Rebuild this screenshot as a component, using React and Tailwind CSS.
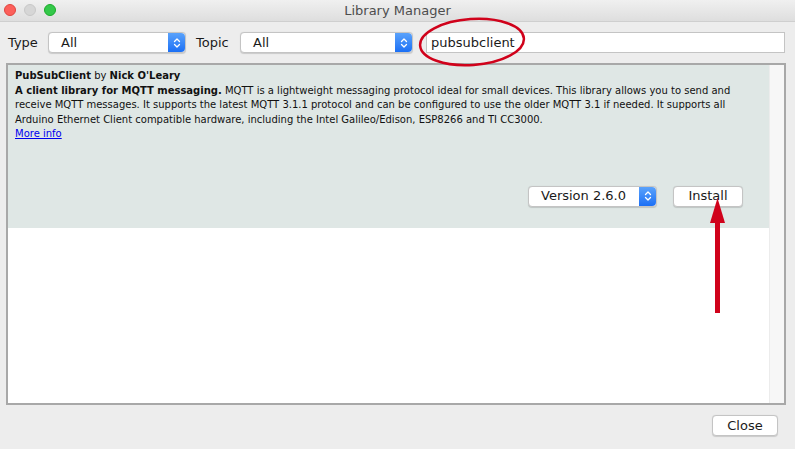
import React from "react";

// blue stepper cap of a mac popup button
function Stepper() {
  return (
    <div className="flex h-full w-[17px] items-center justify-center rounded-r-[4px] bg-gradient-to-b from-[#5aa2fb] to-[#1a6ff5]">
      <svg width="8" height="12" viewBox="0 0 8 12" fill="none">
        <path d="M1.5 4.5 L4 2 L6.5 4.5" stroke="white" strokeWidth="1.3" strokeLinecap="round" strokeLinejoin="round" />
        <path d="M1.5 7.5 L4 10 L6.5 7.5" stroke="white" strokeWidth="1.3" strokeLinecap="round" strokeLinejoin="round" />
      </svg>
    </div>
  );
}

function Popup({ label, className }) {
  return (
    <div
      className={
        "flex h-[21px] items-center justify-between rounded-[4px] border border-[#c4c4c4] bg-white shadow-[0_0.5px_1px_rgba(0,0,0,0.15)] " +
        className
      }
    >
      <span className="pl-[12px] text-[13px] text-[#1a1a1a]">{label}</span>
      <Stepper />
    </div>
  );
}

export default function App() {
  return (
    <div
      className="relative flex h-[449px] w-[795px] flex-col overflow-hidden bg-[#ededed]"
      style={{ fontFamily: '"DejaVu Sans", Verdana, sans-serif' }}
    >
      {/* Title bar */}
      <div className="relative flex h-[22px] items-center justify-center border-b border-[#cfcfcf] bg-gradient-to-b from-[#f0f0f0] to-[#dedede]">
        <div className="absolute left-[4px] top-[4px] flex gap-[8px]">
          <span className="h-[12px] w-[12px] rounded-full border border-[#e0443e] bg-[#fc605b]" />
          <span className="h-[12px] w-[12px] rounded-full border border-[#c8c8c8] bg-[#d6d6d6]" />
          <span className="h-[12px] w-[12px] rounded-full border border-[#1aab29] bg-[#34c84a]" />
        </div>
        <span className="text-[13px] text-[#4d4d4d]">Library Manager</span>
      </div>

      {/* Filters */}
      <div className="mt-[10px] flex h-[21px] items-center pl-[8px] text-[13px] text-[#1a1a1a]">
        <span className="w-[40px]">Type</span>
        <Popup label="All" className="w-[138px]" />
        <span className="ml-[10px] w-[44px]">Topic</span>
        <Popup label="All" className="w-[173px]" />
        <div className="ml-[13px] flex h-[21px] w-[359px] items-center border border-[#c4c4c4] bg-white pl-[4px] text-[13px]">
          pubsubclient
        </div>
      </div>

      {/* List */}
      <div className="ml-[6px] mt-[10px] flex h-[342px] w-[780px] border-2 border-[#a8a8a8] bg-white">
        <div className="flex min-w-0 flex-1 flex-col overflow-hidden">
          <div className="flex h-[163px] flex-col bg-[#dfe7e5] pl-[7px] pt-[4px] text-[10px] leading-[14.5px] text-[#111]">
            <div>
              <b>PubSubClient</b> by <b>Nick O'Leary</b>
            </div>
            <div className="whitespace-nowrap">
              <b>A client library for MQTT messaging.</b> MQTT is a lightweight messaging protocol ideal for small devices. This library allows you to send and
            </div>
            <div className="whitespace-nowrap">
              receive MQTT messages. It supports the latest MQTT 3.1.1 protocol and can be configured to use the older MQTT 3.1 if needed. It supports all
            </div>
            <div className="whitespace-nowrap">
              Arduino Ethernet Client compatible hardware, including the Intel Galileo/Edison, ESP8266 and TI CC3000.
            </div>
            <div>
              <a className="text-[#0000ee] underline">More info</a>
            </div>
            <div className="mt-[44px] flex items-center justify-end pr-[26px]">
              <Popup label="Version 2.6.0" className="w-[129px]" />
              <button className="ml-[16px] h-[21px] w-[70px] rounded-[4px] border border-[#c4c4c4] bg-white text-[13px] text-[#1a1a1a] shadow-[0_0.5px_1px_rgba(0,0,0,0.15)]">
                Install
              </button>
            </div>
          </div>
        </div>
        <div className="w-[15px] shrink-0 border-l border-[#ececec] bg-[#f7f7f7]" />
      </div>

      {/* Bottom */}
      <div className="mt-[10px] flex justify-end pr-[17px]">
        <button className="h-[21px] w-[66px] rounded-[4px] border border-[#c4c4c4] bg-white text-[13px] text-[#1a1a1a] shadow-[0_0.5px_1px_rgba(0,0,0,0.15)]">
          Close
        </button>
      </div>

      {/* annotations */}
      <svg className="pointer-events-none absolute left-0 top-0" width="795" height="449">
        <ellipse cx="472" cy="42" rx="52" ry="23" fill="none" stroke="#d0021b" strokeWidth="2.5" transform="rotate(-4 472 42)" />
        <rect x="715" y="222" width="5" height="91" fill="#d0021b" />
        <polygon points="717.5,198 725,223 710,223" fill="#d0021b" />
      </svg>
    </div>
  );
}
